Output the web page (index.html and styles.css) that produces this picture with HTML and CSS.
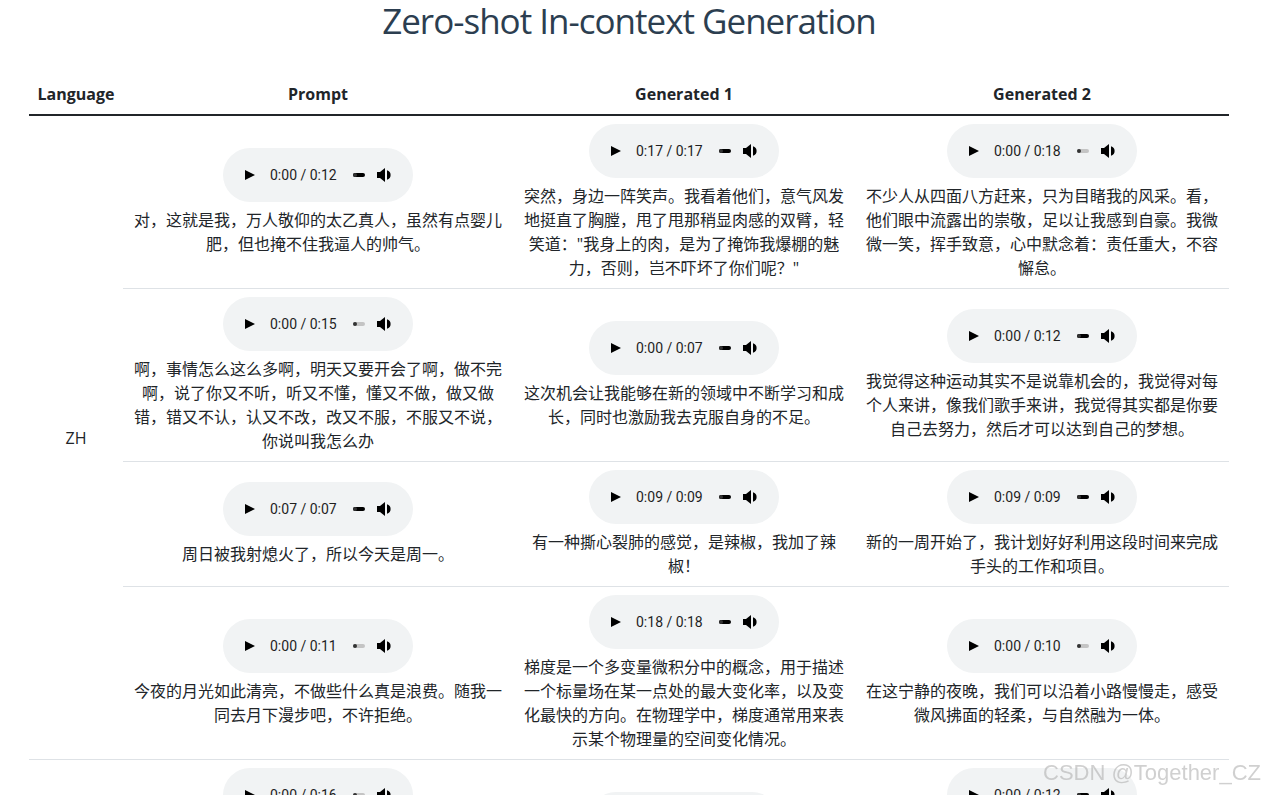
FILE: index.html
```html
<!DOCTYPE html>
<html>
<head>
    <meta charset="utf-8">
    <link rel="stylesheet" href="styles.css">
    <title>Zero-shot In-context Generation</title>
</head>
<body>

    <div class="container">
      <h1 class="title">Zero-shot In-context Generation</h1>

      <table class="samples">
        <colgroup>
          <col class="col-lang">
          <col class="col-prompt">
          <col class="col-gen1">
          <col class="col-gen2">
        </colgroup>
        <thead>
          <tr>
            <th>Language</th>
            <th>Prompt</th>
            <th>Generated 1</th>
            <th>Generated 2</th>
          </tr>
        </thead>
        <tbody>
          <tr>
            <td rowspan="4" class="lang">ZH</td>
            <td>
              <div class="player"><span class="play"></span><span class="time">0:00 / 0:12</span><span class="bar full"></span><svg class="vol" viewBox="0 0 16 14"><path d="M0 4h3l5-4v14l-5-4H0z"/><path d="M10 2.2a5 5 0 0 1 0 9.6z"/></svg></div>
              <p>对，这就是我，万人敬仰的太乙真人，虽然有点婴儿肥，但也掩不住我逼人的帅气。</p>
            </td>
            <td>
              <div class="player"><span class="play"></span><span class="time">0:17 / 0:17</span><span class="bar full"></span><svg class="vol" viewBox="0 0 16 14"><path d="M0 4h3l5-4v14l-5-4H0z"/><path d="M10 2.2a5 5 0 0 1 0 9.6z"/></svg></div>
              <p>突然，身边一阵笑声。我看着他们，意气风发地挺直了胸膛，甩了甩那稍显肉感的双臂，轻笑道："我身上的肉，是为了掩饰我爆棚的魅力，否则，岂不吓坏了你们呢？"</p>
            </td>
            <td>
              <div class="player"><span class="play"></span><span class="time">0:00 / 0:18</span><span class="bar"></span><svg class="vol" viewBox="0 0 16 14"><path d="M0 4h3l5-4v14l-5-4H0z"/><path d="M10 2.2a5 5 0 0 1 0 9.6z"/></svg></div>
              <p>不少人从四面八方赶来，只为目睹我的风采。看，他们眼中流露出的崇敬，足以让我感到自豪。我微微一笑，挥手致意，心中默念着：责任重大，不容懈怠。</p>
            </td>
          </tr>
          <tr>
            <td>
              <div class="player"><span class="play"></span><span class="time">0:00 / 0:15</span><span class="bar"></span><svg class="vol" viewBox="0 0 16 14"><path d="M0 4h3l5-4v14l-5-4H0z"/><path d="M10 2.2a5 5 0 0 1 0 9.6z"/></svg></div>
              <p>啊，事情怎么这么多啊，明天又要开会了啊，做不完啊，说了你又不听，听又不懂，懂又不做，做又做错，错又不认，认又不改，改又不服，不服又不说，你说叫我怎么办</p>
            </td>
            <td>
              <div class="player"><span class="play"></span><span class="time">0:00 / 0:07</span><span class="bar full"></span><svg class="vol" viewBox="0 0 16 14"><path d="M0 4h3l5-4v14l-5-4H0z"/><path d="M10 2.2a5 5 0 0 1 0 9.6z"/></svg></div>
              <p>这次机会让我能够在新的领域中不断学习和成长，同时也激励我去克服自身的不足。</p>
            </td>
            <td>
              <div class="player"><span class="play"></span><span class="time">0:00 / 0:12</span><span class="bar full"></span><svg class="vol" viewBox="0 0 16 14"><path d="M0 4h3l5-4v14l-5-4H0z"/><path d="M10 2.2a5 5 0 0 1 0 9.6z"/></svg></div>
              <p>我觉得这种运动其实不是说靠机会的，我觉得对每个人来讲，像我们歌手来讲，我觉得其实都是你要自己去努力，然后才可以达到自己的梦想。</p>
            </td>
          </tr>
          <tr>
            <td>
              <div class="player"><span class="play"></span><span class="time">0:07 / 0:07</span><span class="bar full"></span><svg class="vol" viewBox="0 0 16 14"><path d="M0 4h3l5-4v14l-5-4H0z"/><path d="M10 2.2a5 5 0 0 1 0 9.6z"/></svg></div>
              <p>周日被我射熄火了，所以今天是周一。</p>
            </td>
            <td>
              <div class="player"><span class="play"></span><span class="time">0:09 / 0:09</span><span class="bar full"></span><svg class="vol" viewBox="0 0 16 14"><path d="M0 4h3l5-4v14l-5-4H0z"/><path d="M10 2.2a5 5 0 0 1 0 9.6z"/></svg></div>
              <p>有一种撕心裂肺的感觉，是辣椒，我加了辣椒！</p>
            </td>
            <td>
              <div class="player"><span class="play"></span><span class="time">0:09 / 0:09</span><span class="bar full"></span><svg class="vol" viewBox="0 0 16 14"><path d="M0 4h3l5-4v14l-5-4H0z"/><path d="M10 2.2a5 5 0 0 1 0 9.6z"/></svg></div>
              <p>新的一周开始了，我计划好好利用这段时间来完成手头的工作和项目。</p>
            </td>
          </tr>
          <tr>
            <td>
              <div class="player"><span class="play"></span><span class="time">0:00 / 0:11</span><span class="bar"></span><svg class="vol" viewBox="0 0 16 14"><path d="M0 4h3l5-4v14l-5-4H0z"/><path d="M10 2.2a5 5 0 0 1 0 9.6z"/></svg></div>
              <p>今夜的月光如此清亮，不做些什么真是浪费。随我一同去月下漫步吧，不许拒绝。</p>
            </td>
            <td>
              <div class="player"><span class="play"></span><span class="time">0:18 / 0:18</span><span class="bar full"></span><svg class="vol" viewBox="0 0 16 14"><path d="M0 4h3l5-4v14l-5-4H0z"/><path d="M10 2.2a5 5 0 0 1 0 9.6z"/></svg></div>
              <p>梯度是一个多变量微积分中的概念，用于描述一个标量场在某一点处的最大变化率，以及变化最快的方向。在物理学中，梯度通常用来表示某个物理量的空间变化情况。</p>
            </td>
            <td>
              <div class="player"><span class="play"></span><span class="time">0:00 / 0:10</span><span class="bar"></span><svg class="vol" viewBox="0 0 16 14"><path d="M0 4h3l5-4v14l-5-4H0z"/><path d="M10 2.2a5 5 0 0 1 0 9.6z"/></svg></div>
              <p>在这宁静的夜晚，我们可以沿着小路慢慢走，感受微风拂面的轻柔，与自然融为一体。</p>
            </td>
          </tr>
          <tr>
            <td class="lang">EN</td>
            <td>
              <div class="player"><span class="play"></span><span class="time">0:00 / 0:16</span><span class="bar"></span><svg class="vol" viewBox="0 0 16 14"><path d="M0 4h3l5-4v14l-5-4H0z"/><path d="M10 2.2a5 5 0 0 1 0 9.6z"/></svg></div>
              <p>But if I could remember just one thing about this old house, it would be the sound of the rain on the roof at night.</p>
            </td>
            <td>
              <div class="player"><span class="play"></span><span class="time">0:00 / 0:09</span><span class="bar"></span><svg class="vol" viewBox="0 0 16 14"><path d="M0 4h3l5-4v14l-5-4H0z"/><path d="M10 2.2a5 5 0 0 1 0 9.6z"/></svg></div>
              <p>The rain kept falling all night long.</p>
            </td>
            <td>
              <div class="player"><span class="play"></span><span class="time">0:00 / 0:12</span><span class="bar full"></span><svg class="vol" viewBox="0 0 16 14"><path d="M0 4h3l5-4v14l-5-4H0z"/><path d="M10 2.2a5 5 0 0 1 0 9.6z"/></svg></div>
              <p>We walked along the river for hours, talking about everything and nothing, until the sun went down behind the hills.</p>
            </td>
          </tr>
        </tbody>
      </table>
    </div>

    <div class="watermark">CSDN @Together_CZ</div>

</body>
</html>
```

FILE: styles.css
```css
/* general styling */
* {
  box-sizing: border-box;
  margin: 0;
  padding: 0;
}

html, body {
  margin: 0;
}

body {
  background-color: #fff;
  color: #212529;
  font-family: "Open Sans", "Noto Sans CJK SC", sans-serif;
  font-size: 16px;
  line-height: 24px;
}

.container {
  margin: 0 38px 0 29px;
  width: 1200px;
}

.title {
  color: #2c3e50;
  font-size: 35px;
  font-weight: 400;
  letter-spacing: -1px;
  line-height: 42px;
  margin-bottom: 32px;
  text-align: center;
}

/* table */
.samples {
  border-collapse: collapse;
  table-layout: fixed;
  width: 100%;
}

.col-lang { width: 94px; }
.col-prompt { width: 390px; }
.col-gen1 { width: 342px; }
.col-gen2 { width: 374px; }

.samples th {
  border-bottom: 2px solid #212529;
  font-weight: 700;
  padding: 8px;
  text-align: center;
}

.samples td {
  border-top: 1px solid #dee2e6;
  padding: 8px;
  text-align: center;
  vertical-align: middle;
}

.samples td p {
  margin-top: 6px;
}

/* audio player look-alike */
.player {
  align-items: center;
  background-color: #f1f3f4;
  border-radius: 27px;
  display: inline-flex;
  height: 54px;
  padding: 0 20px 0 22px;
  vertical-align: top;
  width: 190px;
}

.play {
  border-bottom: 5px solid transparent;
  border-left: 10px solid #000;
  border-top: 5px solid transparent;
  height: 0;
  width: 0;
}

.time {
  color: #1f1f1f;
  font-family: Roboto, "Liberation Sans", sans-serif;
  font-size: 14px;
  margin-left: 15px;
  white-space: nowrap;
}

.bar {
  background-color: #c4c4c4;
  border-radius: 2px;
  height: 4px;
  margin-left: auto;
  position: relative;
  width: 12px;
}

.bar::before {
  background-color: #333;
  border-radius: 50%;
  content: "";
  height: 4px;
  left: 0;
  position: absolute;
  top: 0;
  width: 4px;
}

.bar.full {
  background-color: #000;
}

.vol {
  fill: #000;
  height: 14px;
  margin-left: 12px;
  width: 16px;
}

.watermark {
  color: rgba(170, 170, 170, .55);
  font-family: "Liberation Sans", sans-serif;
  font-size: 22px;
  line-height: 26px;
  position: fixed;
  right: 6px;
  top: 760px;
}
```
